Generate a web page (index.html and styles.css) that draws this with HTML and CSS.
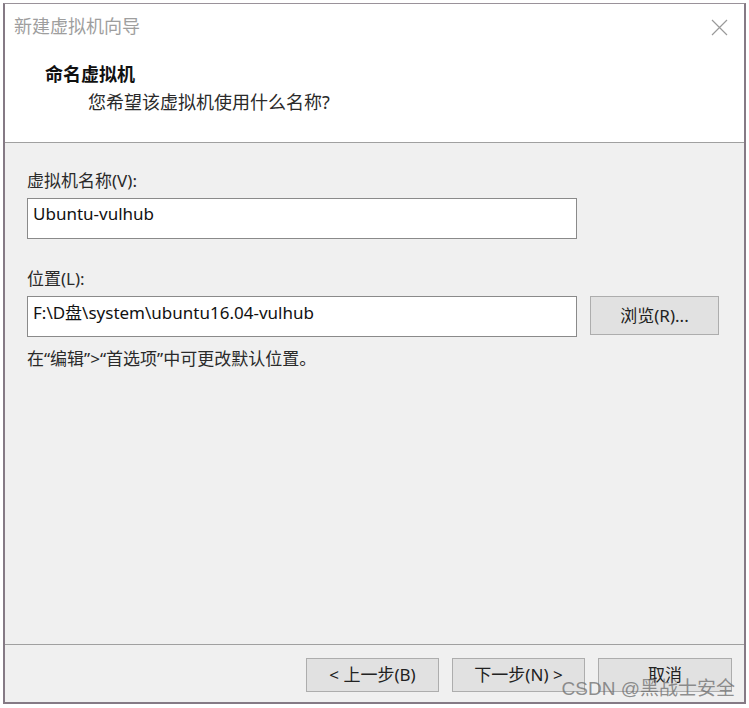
FILE: index.html
```html
<!DOCTYPE html>
<html>

<head>
    <title>新建虚拟机向导</title>
    <link rel="stylesheet" href="styles.css">
</head>

<body>
    <div class="window">
        <div class="header">
            <div class="title-row">
                <span class="title">新建虚拟机向导</span>
                <svg class="close" width="17" height="17" viewBox="0 0 17 17">
                    <path d="M1 1 L16 16 M16 1 L1 16" stroke="#9a9a9a" stroke-width="1.2" fill="none" />
                </svg>
            </div>
            <h2 class="heading">命名虚拟机</h2>
            <p class="subtitle">您希望该虚拟机使用什么名称?</p>
        </div>

        <div class="content">
            <label class="field-label" for="vmname">虚拟机名称(V):</label>
            <input class="text-box" type="text" id="vmname" value="Ubuntu-vulhub">

            <label class="field-label second" for="location">位置(L):</label>
            <div class="location-row">
                <input class="text-box" type="text" id="location" value="F:\D盘\system\ubuntu16.04-vulhub">
                <button class="btn browse" type="button">浏览(R)...</button>
            </div>
            <p class="hint">在“编辑”&gt;“首选项”中可更改默认位置。</p>
        </div>

        <div class="footer">
            <button class="btn nav" type="button">&lt; 上一步(B)</button>
            <button class="btn nav" type="button">下一步(N) &gt;</button>
            <button class="btn nav cancel" type="button">取消</button>
        </div>

        <span class="watermark">CSDN @黑战士安全</span>
    </div>
</body>

</html>
```

FILE: styles.css
```css
body {
    margin: 0;
    background: #ffffff;
    font-family: "Noto Sans", "Noto Sans CJK SC", sans-serif;
    color: #222;
}

.window {
    position: relative;
    box-sizing: border-box;
    margin: 3px;
    width: 743px;
    height: 701px;
    border: 2px solid #857a85;
    border-top: 1px solid #9a929a;
    background: #f0f0f0;
    display: flex;
    flex-direction: column;
}

.header {
    background: #ffffff;
    height: 138px;
    border-bottom: 1px solid #a0a0a0;
    flex-shrink: 0;
}

.title-row {
    display: flex;
    justify-content: space-between;
    align-items: center;
    margin-top: 9px;
    padding: 0 16px 0 9px;
    height: 26px;
}

.title {
    font-size: 18px;
    color: #9e9e9e;
    line-height: 26px;
}

.close {
    margin-top: 2px;
}

.heading {
    margin: 22px 0 0 40px;
    font-size: 18px;
    font-weight: bold;
    line-height: 26px;
    color: #111;
}

.subtitle {
    margin: 2px 0 0 83px;
    font-size: 18px;
    line-height: 26px;
    color: #2a2a2a;
}

.content {
    flex: 1;
    padding: 26px 0 0 22px;
    display: flex;
    flex-direction: column;
    align-items: flex-start;
}

.field-label {
    font-size: 17px;
    line-height: 24px;
    color: #2a2a2a;
}

.field-label.second {
    margin-top: 28px;
}

.text-box {
    box-sizing: border-box;
    margin-top: 5px;
    width: 550px;
    height: 41px;
    padding: 0 5px 10px 5px;
    border: 1px solid #8a8a8a;
    background: #ffffff;
    font-family: "Noto Sans", "Noto Sans CJK SC", sans-serif;
    font-size: 17px;
    color: #111;
    outline: none;
}

.location-row {
    display: flex;
    align-items: flex-start;
    gap: 13px;
}

.btn {
    box-sizing: border-box;
    background: #e1e1e1;
    border: 1px solid #adadad;
    font-family: "Noto Sans", "Noto Sans CJK SC", sans-serif;
    font-size: 17px;
    color: #222;
    padding: 0 0 3px 0;
}

.browse {
    margin-top: 5px;
    width: 129px;
    height: 39px;
}

.hint {
    margin: 10px 0 0 0;
    font-size: 17px;
    line-height: 24px;
    color: #2a2a2a;
}

.footer {
    flex-shrink: 0;
    height: 58px;
    border-top: 1px solid #a0a0a0;
    display: flex;
    justify-content: flex-end;
    align-items: flex-start;
    padding: 13px 12px 0 0;
    gap: 13px;
    box-sizing: border-box;
}

.nav {
    width: 133px;
    height: 34px;
}

.cancel {
    width: 134px;
}

.watermark {
    position: absolute;
    right: 9px;
    bottom: 2px;
    font-family: "Liberation Sans", "Noto Sans CJK SC", sans-serif;
    font-size: 19px;
    color: rgba(110, 110, 110, 0.75);
    pointer-events: none;
}
```
